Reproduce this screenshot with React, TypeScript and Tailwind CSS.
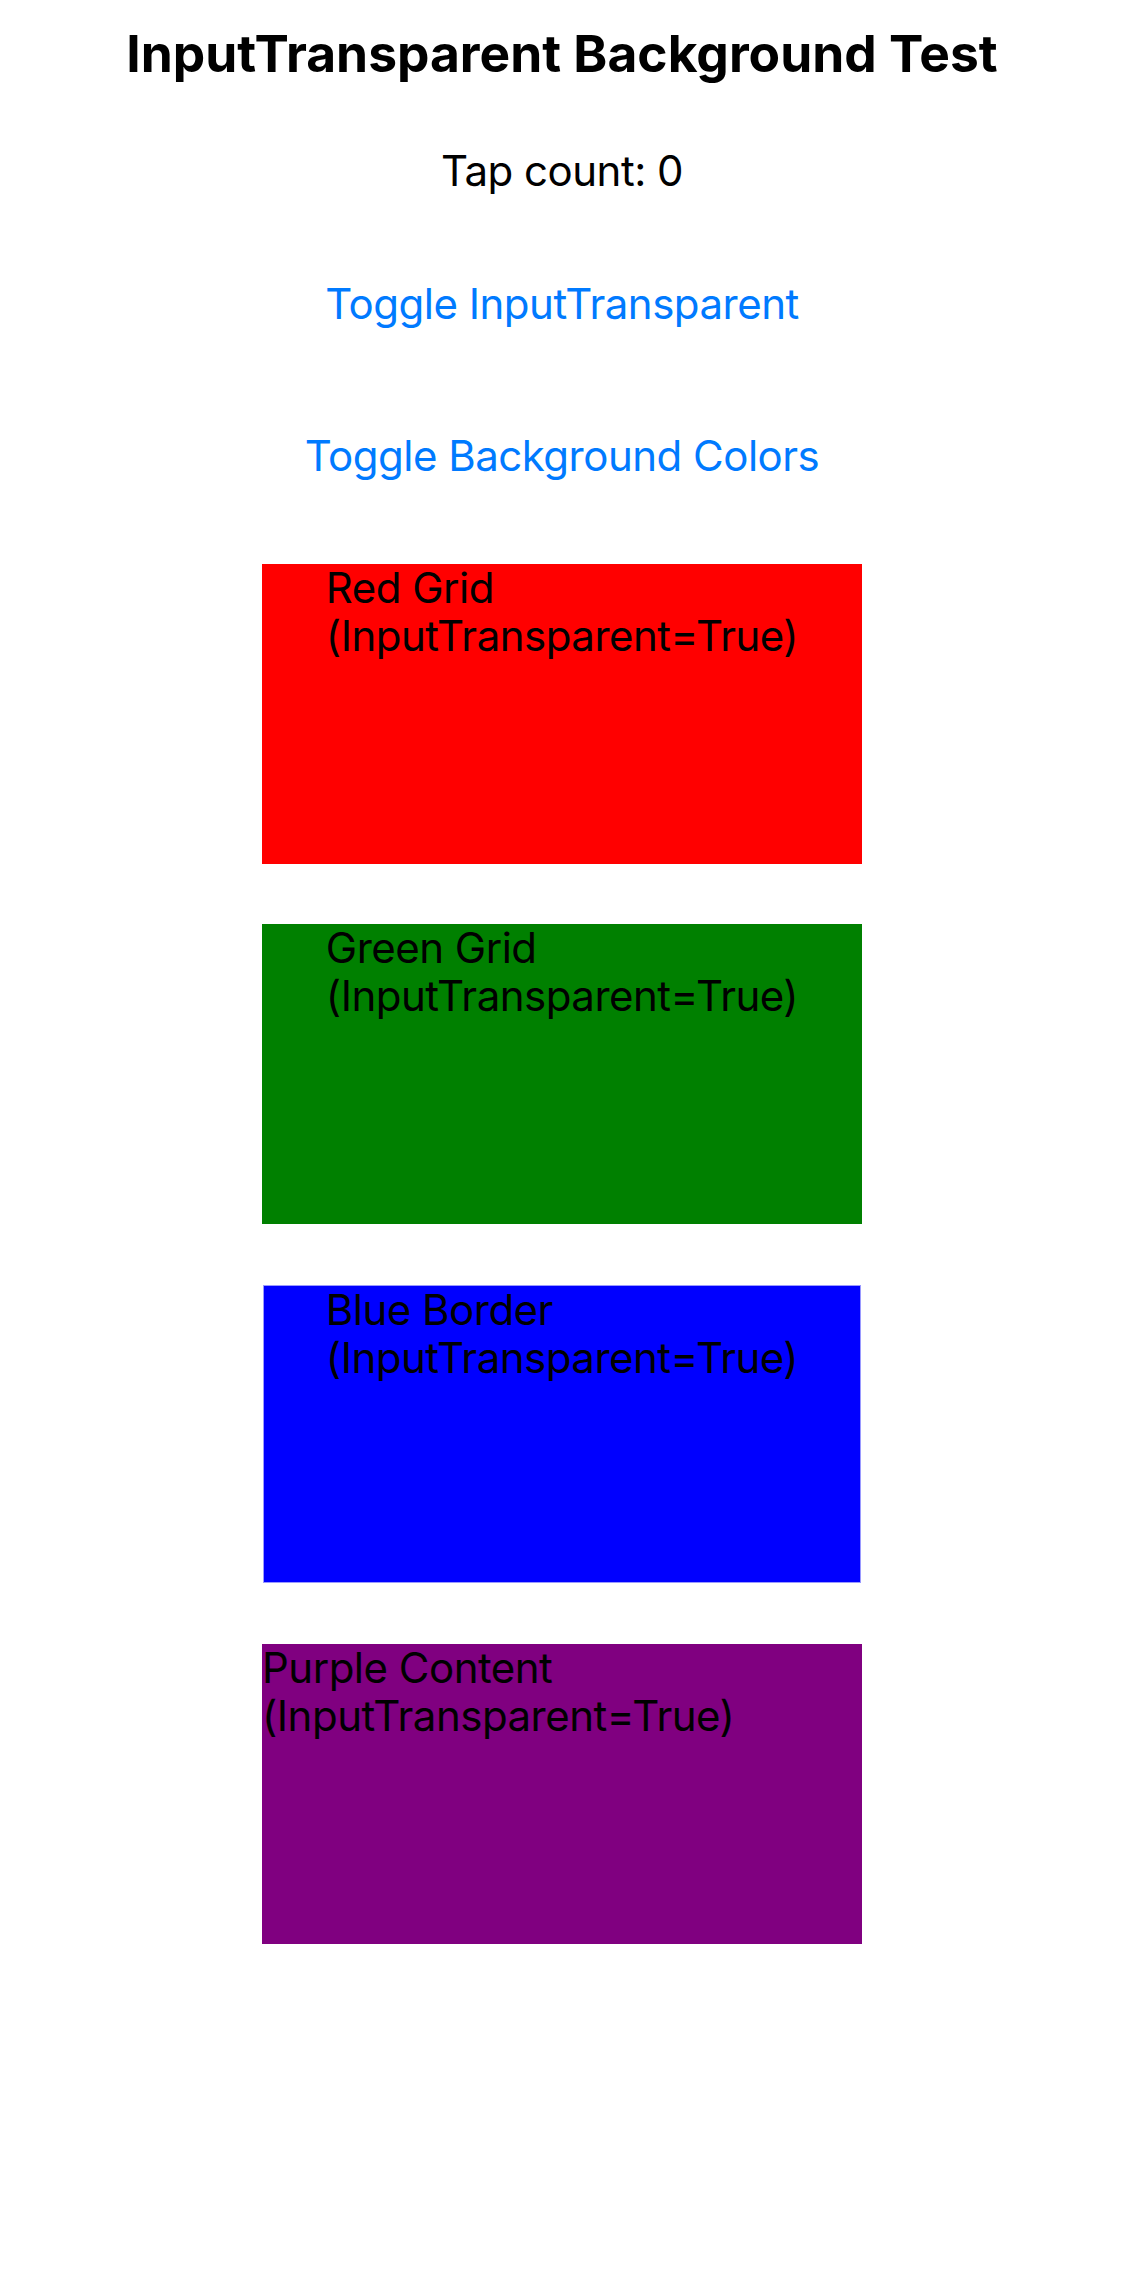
import React from "react";

const font = { fontFamily: "Inter, 'Liberation Sans', sans-serif" };

function Box({ bg, label, centered = true, inner }: { bg: string; label: string; centered?: boolean; inner?: boolean }) {
  return (
    <div className={`w-[600px] h-[300px] ${inner ? "p-px" : bg}`}>
      <div className={`w-full h-full ${inner ? "bg-[#0000ff] border border-[#9a9aff]" : ""} flex ${centered ? "justify-center" : "justify-start"}`}>
        <div className="text-black text-[42px] leading-[48px] tracking-[-0.5px] text-left">
          <div>{label}</div>
          <div>(InputTransparent=True)</div>
        </div>
      </div>
    </div>
  );
}

export default function App() {
  return (
    <div className="w-[1124px] h-[2286px] bg-white flex flex-col items-center" style={font}>
      <div className="h-[108px] flex items-center justify-center text-[51.5px] font-bold text-black tracking-[0px]">
        InputTransparent Background Test
      </div>
      <div className="h-[124px] flex items-center justify-center text-[42px] text-black tracking-[-0.5px]">
        Tap count: 0
      </div>
      <div className="h-[142px] flex items-center justify-center text-[42px] text-[#007aff] tracking-[-0.5px]">
        Toggle InputTransparent
      </div>
      <div className="h-[162px] flex items-center justify-center text-[42px] text-[#007aff] tracking-[-0.5px]">
        Toggle Background Colors
      </div>
      <div className="mt-[28px] flex flex-col gap-[60px]">
        <Box bg="bg-[#ff0000]" label="Red Grid" />
        <Box bg="bg-[#008000]" label="Green Grid" />
        <Box bg="bg-white" label="Blue Border" inner />
        <Box bg="bg-[#800080]" label="Purple Content" centered={false} />
      </div>
    </div>
  );
}
